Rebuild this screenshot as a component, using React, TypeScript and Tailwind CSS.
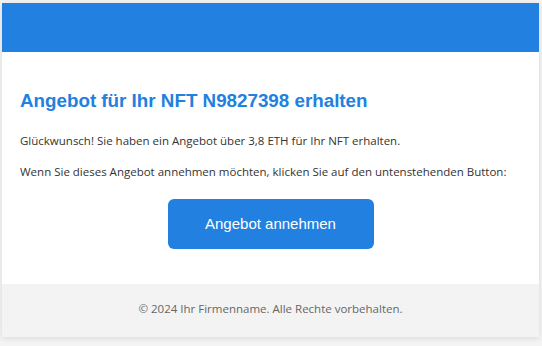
export default function App() {
  return (
    <div className="min-h-screen w-full bg-[#f4f4f4] px-[2px] pt-[3px]">
      <div className="w-[537px] bg-white shadow-[0_1px_6px_rgba(0,0,0,0.12)]">
        <div className="h-[49px] bg-[#2180e0]" />
        <div className="px-[18px] pt-[38px] pb-[35px]">
          <h1 className="font-['Liberation_Sans',Arial,sans-serif] text-[18.8px] font-bold leading-[22px] text-[#2180e0]">
            Angebot für Ihr NFT N9827398 erhalten
          </h1>
          <p className="mt-[21px] font-['Open_Sans',sans-serif] text-[11.5px] leading-[16px] text-[#333]">
            Glückwunsch! Sie haben ein Angebot über 3,8 ETH für Ihr NFT erhalten.
          </p>
          <p className="mt-[15px] font-['Open_Sans',sans-serif] text-[11.5px] leading-[16px] text-[#333]">
            Wenn Sie dieses Angebot annehmen möchten, klicken Sie auf den untenstehenden Button:
          </p>
          <div className="mt-[19px] flex justify-center">
            <button className="h-[50px] w-[206px] rounded-[6px] bg-[#2180e0] font-['Liberation_Sans',Arial,sans-serif] text-[15px] text-white">
              Angebot annehmen
            </button>
          </div>
        </div>
        <div className="flex h-[53px] items-center justify-center bg-[#f3f3f3] pb-[3px] font-['Open_Sans',sans-serif] text-[11.5px] text-[#666]">
          © 2024 Ihr Firmenname. Alle Rechte vorbehalten.
        </div>
      </div>
    </div>
  );
}
